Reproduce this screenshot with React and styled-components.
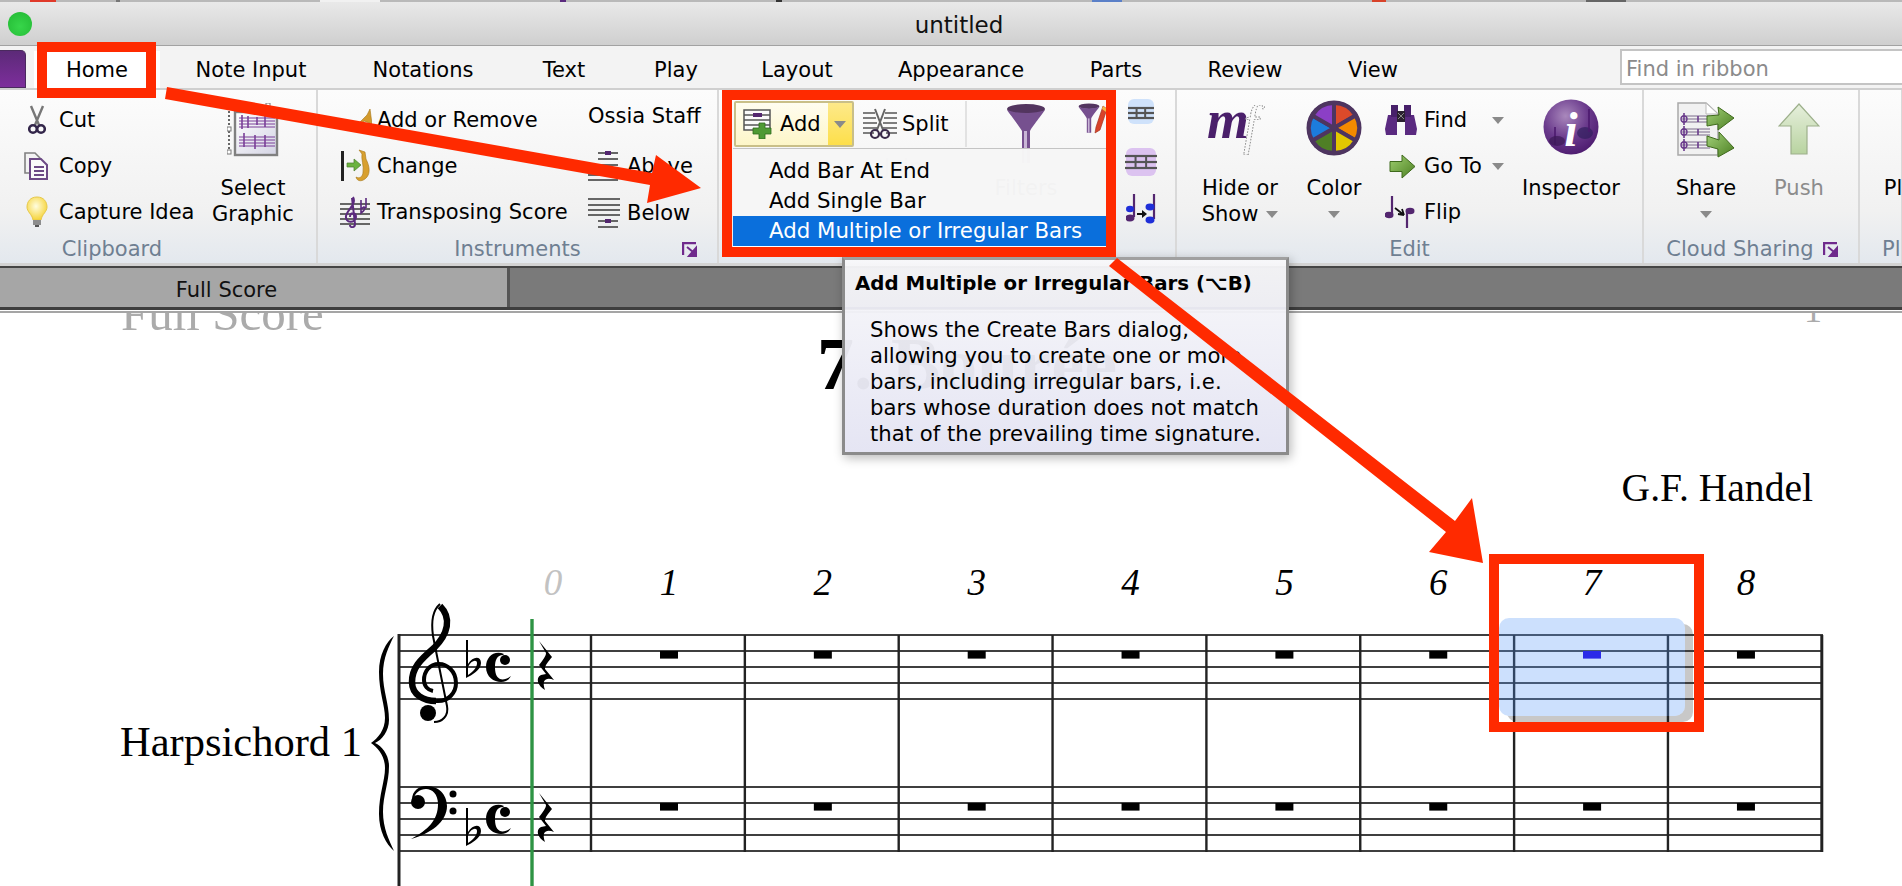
import React from "react";
import styled, { createGlobalStyle } from "styled-components";

const Global = createGlobalStyle`
  html, body { margin: 0; padding: 0; width: 1902px; height: 886px; overflow: hidden; background: #fff; }
  body { font-family: "DejaVu Sans", sans-serif; font-size: 21px; color: #000; }
  * { box-sizing: border-box; }
`;

const Window = styled.div`
  position: relative; width: 1902px; height: 886px; overflow: hidden;
  display: flex; flex-direction: column; background: #fff;
`;
const TopStrip = styled.div`
  height: 2px; display: flex; background: #b9b9b9;
`;
const StripBit = styled.span`
  width: ${p => p.$w}px; margin-left: ${p => p.$m}px; background: ${p => p.$c};
`;
const TitleBar = styled.div`
  height: 44px; display: flex; align-items: center; justify-content: center; position: relative;
  background: linear-gradient(#e9e9e9, #cfcfcf); border-bottom: 1px solid #a2a2a2;
  font-size: 23px; padding: 3px 0 0 16px; color: #111;
`;
const ZoomDot = styled.span`
  position: absolute; left: 8px; top: 10px; width: 24px; height: 24px; border-radius: 50%;
  background: radial-gradient(circle at 50% 60%, #37d64a, #22b833);
`;
const TabRow = styled.div`
  height: 44px; display: flex; align-items: center; padding: 5px 0 0 34px; position: relative;
  background: #f3f3f3; border-bottom: 2px solid #cfcfcf;
`;
const AppButton = styled.span`
  position: absolute; left: 0; top: 4px; width: 26px; height: 38px; border-radius: 0 5px 0 0;
  background: linear-gradient(#5c2a78, #7d2e9c); border: 1px solid #4a2a5e; border-left: none;
`;
const Tab = styled.div`
  width: ${p => p.$w}px; height: 37px; display: flex; align-items: center; justify-content: center;
  background: ${p => (p.$on ? "#fff" : "transparent")};
`;
const SearchBox = styled.div`
  position: absolute; left: 1620px; top: 3px; width: 290px; height: 36px;
  background: #fff; border: 2px solid #c4c4c4; color: #8b8b8b;
  display: flex; align-items: center; padding: 4px 0 0 4px;
`;
const Ribbon = styled.div`
  height: 173px; display: flex;
  background: linear-gradient(#fcfcfc 0%, #f1f1f1 70%, #e3e8ee 100%);
`;
const Group = styled.section`
  width: ${p => p.$w}px; flex: none; display: flex; flex-direction: column; position: relative;
  border-right: 2px solid #d9d9d9; overflow: ${p => (p.$clip ? "hidden" : "visible")};
`;
const GroupBody = styled.div`
  flex: 1; display: flex; padding: 7px 0 0 ${p => p.$pl}px; min-height: 0;
`;
const GroupLabel = styled.div`
  height: 28px; line-height: 28px; color: #6f7f92;
  padding-right: ${p => p.$pr || 0}px; padding-left: ${p => p.$pl || 0}px;
  text-align: ${p => (p.$left ? "left" : "center")};
`;
const Launcher = styled.svg`
  position: absolute; right: ${p => p.$r}px; bottom: 6px;
`;
const Stack = styled.div`
  display: flex; flex-direction: column; flex: none; width: ${p => (p.$w ? `${p.$w}px` : "auto")};
  margin-left: ${p => p.$ml || 0}px; row-gap: ${p => p.$gap || 0}px;
`;
const Row = styled.div`
  height: 46px; display: flex; align-items: center; white-space: nowrap;
`;
const IconCell = styled.span`
  width: ${p => p.$w}px; flex: none; display: flex; align-items: center;
  padding-left: ${p => p.$pl || 0}px;
`;
const Caret = styled.i`
  display: block; width: 0; height: 0; border: 6px solid transparent; border-bottom: none;
  border-top: 7px solid #8a8a8a;
  margin-left: ${p => p.$ml || "0"};
`;
const BigButton = styled.div`
  width: ${p => p.$w}px; flex: none; display: flex; flex-direction: column; align-items: center;
  margin-left: ${p => p.$ml || 0}px;
  color: ${p => (p.$dim ? "#8c8c8c" : "#000")};
`;
const BigIcon = styled.div`
  height: 78px; padding-top: ${p => p.$pt}px; display: flex; align-items: flex-start;
`;
const BigLine = styled.div`
  height: 26px; line-height: 26px; display: flex; align-items: center; column-gap: 8px; white-space: nowrap;
`;
const OssiaLabel = styled.div`
  height: 38px; line-height: 38px; margin-bottom: 6px; white-space: nowrap;
`;
const AddButton = styled.div`
  width: 120px; height: 46px; flex: none; margin-top: 4px; display: flex; align-items: center; padding-left: 7px;
  border: 2px solid #c9bf88; border-radius: 2px;
  background: linear-gradient(#fffdf0, #fdf6c8);
`;
const AddText = styled.span`
  margin-left: 7px;
`;
const AddDrop = styled.span`
  width: 24px; align-self: stretch; margin-left: auto; display: flex; align-items: center; justify-content: center;
  background: linear-gradient(#fde98a, #fddf4a);
`;
const SplitButton = styled.div`
  width: 113px; height: 46px; flex: none; margin-top: 4px; display: flex; align-items: center; padding-left: 9px;
  column-gap: 5px; border-right: 2px solid #e2e2e2;
`;
const TopRow = styled.div`
  display: flex;
`;
const GhostRow = styled.div`
  height: 40px; display: flex; align-items: center; padding-left: 150px; color: #888;
`;
const Menu = styled.ul`
  position: absolute; left: 14px; top: 58px; width: 374px; height: 99px; margin: 0; padding: 7px 0 0;
  list-style: none; background: rgba(246, 246, 246, 0.985); border-top: 1px solid #c4c4c4;
`;
const MenuItem = styled.li`
  height: 30px; line-height: 30px; padding-left: 36px; font-size: 21.3px;
  background: ${p => (p.$on ? "#0a6fdc" : "transparent")};
  color: ${p => (p.$on ? "#fff" : "#000")};
  box-shadow: ${p => (p.$on ? "0 1px 0 #fff" : "none")};
`;
const ColorIcons = styled.div`
  width: 66px; display: flex; flex-direction: column; align-items: center; padding-top: 2px;
`;
const SmallIcon = styled.div`
  height: ${p => p.$h}px; display: flex; align-items: flex-start;
`;
const TabStrip = styled.div`
  height: 44px; flex: none; display: flex; background: #7a7a7a; border-top: 2px solid #454545;
  border-bottom: 3px solid #3e3e3e; position: relative; margin-top: 3px;
  box-shadow: 0 -3px 0 #d3d3d3, 0 1px 0 #fff, 0 3px 0 #a5a5a5;
  z-index: 1;
`;
const ScoreTab = styled.div`
  width: 510px; background: #a6a6a6; border-right: 3px solid #555; display: flex; align-items: center;
  justify-content: center; padding: 4px 54px 0 0; color: #111;
`;
const Sheet = styled.div`
  flex: 1; display: flex; flex-direction: column; font-family: "Liberation Serif", serif; background: #fff; min-height: 0;
`;
const RunningHead = styled.div`
  display: flex; justify-content: space-between; padding: 0 80px 0 121px; margin-top: -21px;
  font-size: 49px; line-height: 49px; color: #ababab;
`;
const PageNumber = styled.span`
  font-size: 36px; margin-top: -3px;
`;
const Title = styled.div`
  font-size: 74px; line-height: 74px; font-weight: bold; padding-left: 817px; margin-top: -11px; white-space: nowrap;
`;
const Composer = styled.div`
  text-align: right; font-size: 39.6px; line-height: 40px; padding-right: 89px; margin-top: 67px;
`;
const Score = styled.svg`
  display: block; margin-top: 62px; flex: none;
`;
const Tooltip = styled.div`
  position: absolute; left: 842px; top: 257px; width: 447px; height: 198px; z-index: 5;
  border: 3px solid #8b8b8b; border-top-color: #a0a0a0;
  background: linear-gradient(rgba(248,248,250,0.95), rgba(228,228,243,0.97));
  box-shadow: 2px 3px 10px rgba(0,0,0,0.28);
  display: flex; flex-direction: column;
`;
const TipTitle = styled.div`
  height: 49px; display: flex; align-items: center; padding-left: 10px; font-weight: bold; font-size: 19.8px;
  border-bottom: 2px solid #e6e6ee; white-space: nowrap;
`;
const TipBody = styled.div`
  padding: 8px 0 0 25px; line-height: 26px; font-size: 21.2px; white-space: nowrap;
`;
const Overlay = styled.svg`
  position: absolute; left: 0; top: 0; z-index: 8; pointer-events: none;
`;
const RedBox = styled.div`
  position: absolute; z-index: 7; border: 10px solid #ff2a00;
  left: ${p => p.$x}px; top: ${p => p.$y}px; width: ${p => p.$w}px; height: ${p => p.$h}px;
`;

const I = ({ w, h, children, ...r }) => (
  <svg width={w} height={h} viewBox={`0 0 ${w} ${h}`} style={{ display: "block", flex: "none" }} {...r}>{children}</svg>
);

const Scissors = () => (
  <I w={18} h={30}>
    <path d="M3 1 L11 20 M15 1 L7 20" stroke="#777" strokeWidth="2.4" fill="none" />
    <circle cx="5" cy="24" r="3.8" fill="none" stroke="#33264a" strokeWidth="2.6" />
    <circle cx="13" cy="24" r="3.8" fill="none" stroke="#33264a" strokeWidth="2.6" />
  </I>
);
const Copy = () => (
  <I w={24} h={28}>
    <path d="M1 1 H11 L16 6 V21 H1 Z" fill="#f3f3f3" stroke="#808080" strokeWidth="1.6" />
    <path d="M6 7 H17 L23 13 V27 H6 Z" fill="#fafafa" stroke="#6d4a86" strokeWidth="2" />
    <path d="M10 15 H20 M10 19 H20 M10 23 H20" stroke="#6d4a86" strokeWidth="2" />
  </I>
);
const Bulb = () => (
  <I w={22} h={32}>
    <defs><radialGradient id="bulb" cx="45%" cy="40%" r="60%"><stop offset="0" stopColor="#fffde0" /><stop offset="1" stopColor="#f6d43a" /></radialGradient></defs>
    <path d="M11 1 C4 1 1 6 1 11 C1 16 6 18 7 24 H15 C16 18 21 16 21 11 C21 6 18 1 11 1 Z" fill="url(#bulb)" stroke="#e6c84a" />
    <rect x="7" y="24" width="8" height="5" fill="#8d8d8d" /><rect x="9" y="29" width="4" height="2" fill="#555" />
  </I>
);
const Staffs = ({ x, y, w, c = "#7a3f98" }) => (
  <g stroke={c} strokeWidth="1">
    {[0, 3, 6, 9].map(i => <path key={i} d={`M${x} ${y + i} H${x + w}`} />)}
  </g>
);
const SelectGraphic = () => (
  <I w={52} h={54}>
    <path d="M2 4 V49" stroke="#666" strokeWidth="2" strokeDasharray="2 2" fill="none" />
    <path d="M2 4 H40" stroke="#777" strokeWidth="1" strokeDasharray="2 2" />
    <rect x="39" y="0" width="4" height="4" fill="#fff" stroke="#777" />
    <rect x="0" y="24" width="4" height="4" fill="#fff" stroke="#777" />
    <rect x="0" y="47" width="4" height="4" fill="#fff" stroke="#777" />
    <rect x="8" y="9" width="42" height="43" fill="url(#sg)" stroke="#808080" strokeWidth="2.4" />
    <defs><linearGradient id="sg" x1="0" y1="0" x2="1" y2="1"><stop offset="0" stopColor="#fff" /><stop offset="1" stopColor="#d4d4e4" /></linearGradient></defs>
    <Staffs x={12} y={15} w={36} /><Staffs x={12} y={34} w={36} />
    <path d="M15 12 V26 M21 13 V25 M30 14 V22 M38 13 V24 M17 30 V44 M28 32 V46 M38 32 V44" stroke="#7a3f98" strokeWidth="1.6" />
  </I>
);
const Trumpet = () => (
  <I w={32} h={24}>
    <path d="M1 18 H16 L27 7 L30 1 L32 16 L24 13 L18 20 H4 Z" fill="#d39a2c" stroke="#a47618" strokeWidth=".6" />
    <rect x="6" y="19" width="10" height="4" fill="#c9c9c9" />
  </I>
);
const ChangeIc = () => (
  <I w={32} h={34}>
    <rect x="1" y="2" width="3" height="30" fill="#222" />
    <path d="M7 14 H14 V10 L21 16 L14 22 V18 H7 Z" fill="#6cb33f" stroke="#4a7d2b" strokeWidth=".7" />
    <path d="M19 1 L25 3 L26 10 C30 18 30 24 27 28 C23 33 17 33 16 28 C19 30 23 28 23 23 C24 17 21 10 22 5 Z" fill="#d8a02f" stroke="#a47618" strokeWidth=".6" />
  </I>
);
const Transpose = () => (
  <I w={30} h={32}>
    <g stroke="#666" strokeWidth="2">{[8, 13, 18, 23, 28].map(y => <path key={y} d={`M0 ${y} H30`} />)}</g>
    <path d="M13 1 C17 8 7 14 6 20 C5 27 15 28 16 21 C16 16 10 16 10 21 M12 2 L15 28 C15 32 10 32 10 29" stroke="#5b2a7e" strokeWidth="2" fill="none" />
    <path d="M21 4 V17 C24 15 26 12 24 11 L21 13 M26 2 V12" stroke="#5b2a7e" strokeWidth="1.6" fill="none" />
  </I>
);
const Above = () => (
  <I w={32} h={30}>
    <g stroke="#666" strokeWidth="2"><path d="M10 2 H30 M10 8 H30 M10 14 H30 M10 20 H30 M0 24 H30 M0 29 H30" /></g>
    <rect x="17" y="0" width="6" height="4" fill="#53266f" />
  </I>
);
const Below = () => (
  <I w={32} h={30}>
    <g stroke="#666" strokeWidth="2"><path d="M0 1 H32 M0 7 H32 M0 12 H32 M0 17 H32 M10 23 H30 M10 29 H30" /></g>
    <rect x="17" y="21" width="6" height="4" fill="#53266f" />
  </I>
);
const LaunchIc = (p) => (
  <Launcher width="16" height="15" viewBox="0 0 16 15" {...p}>
    <path d="M1 13 V1 H14" stroke="#6f2a8c" strokeWidth="2.4" fill="none" />
    <path d="M5 5 L11 10 M14 6 V14 H7 Z" stroke="#6f2a8c" strokeWidth="2" fill="#6f2a8c" />
  </Launcher>
);
const AddIc = () => (
  <I w={30} h={30}>
    <rect x="1" y="1" width="26" height="20" fill="#fafafa" stroke="#555" strokeWidth="1.5" />
    <g stroke="#555" strokeWidth="1.5"><path d="M1 6 H27 M1 11 H27 M1 16 H27" /></g>
    <rect x="10" y="4" width="9" height="4" fill="#53266f" />
    <path d="M16 14 H22 V19 H28 V25 H22 V30 H16 V25 H10 V19 H16 Z" fill="#4f9a34" stroke="#2f6a1c" strokeWidth=".8" />
  </I>
);
const SplitIc = () => (
  <I w={34} h={32}>
    <g stroke="#555" strokeWidth="1.6"><path d="M0 5 H12 M22 5 H34 M0 10 H13 M21 10 H34 M0 15 H14 M20 15 H34 M0 20 H14 M20 20 H34 M0 25 H11 M23 25 H34" /></g>
    <path d="M12 1 L20 22 M22 1 L14 22" stroke="#666" strokeWidth="2" />
    <circle cx="12" cy="26" r="4" fill="none" stroke="#3a2a4a" strokeWidth="2.2" /><circle cx="22" cy="26" r="4" fill="none" stroke="#3a2a4a" strokeWidth="2.2" />
  </I>
);
const Funnel = () => (
  <I w={40} h={60}>
    <ellipse cx="20" cy="6" rx="19" ry="5" fill="#53355f" />
    <path d="M1 7 C3 10 14 24 16 28 V60 H24 V28 C26 24 37 10 39 7 C30 11 10 11 1 7 Z" fill="#76508f" />
    <rect x="18" y="28" width="3" height="32" fill="#c9b6d6" />
  </I>
);
const Pencil = () => (
  <I w={31} h={31}>
    <g transform="scale(.55)"><ellipse cx="20" cy="6" rx="19" ry="5" fill="#53355f" /><path d="M1 7 C3 10 14 24 16 28 V54 H24 V28 C26 24 37 10 39 7 C30 11 10 11 1 7 Z" fill="#76508f" /><rect x="18" y="28" width="3" height="26" fill="#c9b6d6" /></g>
    <path d="M25 3 L29 6 L22 27 L17 30 L18 24 Z" fill="#d8432a" stroke="#9a2c18" strokeWidth=".6" />
    <path d="M25 3 L29 6 L28 9 L24 6 Z" fill="#f0b84a" />
  </I>
);
const Tile = ({ w, h, bg, lines }) => (
  <I w={w} h={h}>
    <rect x={w > 28 ? 1 : 0} y="0" width={w > 28 ? w - 2 : w} height={h} rx="6" fill={bg} />
    <g stroke="#555" strokeWidth="2.2">{lines.map(y => <path key={y} d={`M0 ${y} H${w}`} />)}</g>
    <path d={`M${w * 0.33} ${lines[0]} V${lines[lines.length - 1]} M${w * 0.66} ${lines[0]} V${lines[lines.length - 1]}`} stroke="#555" strokeWidth="2" />
  </I>
);
const SwapNotes = () => (
  <I w={30} h={32}>
    <path d="M8 1 V24" stroke="#53266f" strokeWidth="2.2" /><ellipse cx="4" cy="25" rx="4.5" ry="3.4" fill="#53266f" />
    <ellipse cx="4" cy="16" rx="4" ry="3.2" fill="#1f2fd8" />
    <path d="M28 1 V26" stroke="#53266f" strokeWidth="2.2" /><ellipse cx="24" cy="27" rx="4.5" ry="3.4" fill="#1f2fd8" /><ellipse cx="24" cy="14" rx="4.5" ry="3.4" fill="#1f2fd8" />
    <path d="M11 20 H16 V17 L21 21 L16 25 V22 H11 Z" fill="#111" />
  </I>
);
const MF = () => (
  <I w={66} h={50}>
    <text x="0" y="33" fontFamily="Liberation Serif, serif" fontStyle="italic" fontWeight="bold" fontSize="54" fill="#4a1f6a">m</text>
    <text x="36" y="38" fontFamily="Liberation Serif, serif" fontStyle="italic" fontSize="56" fill="none" stroke="#888" strokeWidth=".9" strokeDasharray="1.6 1.4">f</text>
  </I>
);
const wedge = (a0, a1, r = 25, c = 28) => {
  const p = a => [c + r * Math.cos((a * Math.PI) / 180), c - r * Math.sin((a * Math.PI) / 180)];
  const [x0, y0] = p(a0), [x1, y1] = p(a1);
  return `M${c} ${c} L${x0} ${y0} A${r} ${r} 0 0 0 ${x1} ${y1} Z`;
};
const Wheel = () => (
  <I w={56} h={56}>
    <circle cx="28" cy="28" r="27.5" fill="#4e3560" />
    {[[30, 90, "#dc4a2a"], [-30, 30, "#f48a00"], [-90, -30, "#e3c800"], [-150, -90, "#4f7f25"], [150, 210, "#1c7cdc"], [90, 150, "#8b3fc6"]].map(([a, b, c]) => (
      <path key={a} d={wedge(a, b)} fill={c} stroke="#4e3560" strokeWidth="4" />
    ))}
  </I>
);
const Binoculars = () => (
  <I w={32} h={30}>
    <path d="M0 24 L3 10 H12 V30 H1 Z M20 10 H29 L32 24 L31 30 H20 Z" fill="#5a2a80" />
    <rect x="6" y="0" width="7" height="12" fill="#47206a" /><rect x="19" y="0" width="7" height="12" fill="#47206a" />
    <rect x="12" y="6" width="8" height="11" fill="#2a2030" />
    <path d="M13 8 L19 14 M19 8 L13 14" stroke="#888" />
  </I>
);
const GreenArrow = () => (
  <I w={27} h={25}>
    <defs><linearGradient id="ga" x1="0" y1="0" x2="1" y2="1"><stop offset="0" stopColor="#9fd070" /><stop offset="1" stopColor="#4c7f22" /></linearGradient></defs>
    <path d="M1 7.5 H13 V1 L26 12.5 L13 24 V17.5 H1 Z" fill="url(#ga)" stroke="#3f6a1c" />
  </I>
);
const FlipIc = () => (
  <I w={31} h={33}>
    <path d="M7 0 V19" stroke="#53266f" strokeWidth="2.2" /><ellipse cx="4" cy="19" rx="4.5" ry="3.2" fill="#53266f" />
    <path d="M22 32 V15" stroke="#53266f" strokeWidth="2.2" /><ellipse cx="25" cy="15" rx="4.5" ry="3.2" fill="#53266f" />
    <path d="M10 12 L19 19 M19 19 L13 18 M19 19 L17 13" stroke="#111" strokeWidth="1.8" fill="none" />
  </I>
);
const Inspector = () => (
  <I w={56} h={56}>
    <defs>
      <radialGradient id="insp" cx="40%" cy="30%" r="75%"><stop offset="0" stopColor="#a988bc" /><stop offset=".55" stopColor="#6a3a8c" /><stop offset="1" stopColor="#4c1a6e" /></radialGradient>
    </defs>
    <circle cx="28" cy="28" r="27.5" fill="url(#insp)" />
    <ellipse cx="42" cy="34" rx="8" ry="6" fill="#32205e" opacity=".7" />
    <path d="M46 33 V10 M12 46 V28" stroke="#4c1a6e" strokeWidth="1.6" />
    <ellipse cx="14" cy="42" rx="8" ry="5" fill="#3a1a56" opacity=".7" />
    <text x="28" y="47" textAnchor="middle" fontFamily="Liberation Serif, serif" fontStyle="italic" fontWeight="bold" fontSize="48" fill="#fff">i</text>
  </I>
);
const Share = () => (
  <I w={58} h={56}>
    <path d="M1 1 H29 L41 12 V53 H1 Z" fill="#f1f1f1" stroke="#a9a9a9" strokeWidth="1.5" />
    <path d="M29 1 V12 H41 Z" fill="#fff" stroke="#bbb" />
    {[17, 30, 43].map(y => (
      <g key={y}><g stroke="#7a6a8a" strokeWidth="1"><path d={`M5 ${y - 3} H33 M5 ${y} H33 M5 ${y + 3} H33`} /></g>
        <path d={`M7 ${y - 6} V${y + 6} M21 ${y - 3} V${y + 3}`} stroke="#6a3a8c" strokeWidth="1.6" /><circle cx="7" cy={y} r="3" fill="none" stroke="#6a3a8c" strokeWidth="1.4" /></g>
    ))}
    <path d="M30 14 L42 13 L41 5 L57 16 L41 28 L41 22 L30 24 Z" fill="url(#sa)" stroke="#3f6a1c" />
    <path d="M30 34 L42 38 L42 30 L57 46 L41 55 L41 47 L30 44 Z" fill="url(#sa)" stroke="#3f6a1c" />
    <defs><linearGradient id="sa" x1="0" y1="0" x2="1" y2="1"><stop offset="0" stopColor="#a4d27a" /><stop offset="1" stopColor="#4b7f22" /></linearGradient></defs>
  </I>
);
const Push = () => (
  <I w={42} h={52}>
    <defs><linearGradient id="pu" x1="0" y1="0" x2="0" y2="1"><stop offset="0" stopColor="#e6efdc" /><stop offset="1" stopColor="#b8d3a0" /></linearGradient></defs>
    <path d="M21 1 L41 23 H29 V51 H13 V23 H1 Z" fill="url(#pu)" stroke="#9db08c" strokeWidth="1.2" />
  </I>
);

const Treble = () => (
  <g fill="none" stroke="#000">
    <path d="M440 606 C452 618 448 634 434 648 C420 660 412 668 412 682 C412 695 424 701 436 701" strokeWidth="6.5" />
    <path d="M436 701 C449 702 456 692 456 683 C456 671 447 664 439 664 C429 664 424 672 424 680 C424 686 428 690 433 691" strokeWidth="4" />
    <path d="M440 604 C433 610 431 622 433 636 L447 706 C449 716 442 722 434 722" strokeWidth="2" />
    <circle cx="428" cy="713" r="8" fill="#000" stroke="none" />
  </g>
);
const BassClef = () => (
  <g>
    <path d="M412 800 C412 790 420 786 426 786 C442 786 447 798 447 806 C447 822 430 834 411 839 C428 830 438 820 438 804 C438 794 432 789 426 789 C420 789 415 793 414 798 Z" fill="#000" />
    <circle cx="418" cy="802" r="7" fill="#000" /><circle cx="453" cy="794" r="3.5" fill="#000" /><circle cx="453" cy="811" r="3.5" fill="#000" />
  </g>
);
const FlatSign = ({ y }) => (
  <path transform={`translate(0 ${y})`} d="M466 640 H468 V664 C473 656 481 656 481 663 C481 670 472 675 466 678 Z M468 667 V675 C474 671 477 667 477 663 C477 659 471 660 468 667 Z" fill="#000" fillRule="evenodd" />
);
const Common = ({ y }) => (
  <g transform={`translate(0 ${y})`}>
    <path d="M504 654 C494 650 486 657 486 667 C486 677 494 682 501 682 C505 682 509 680 511 676 C507 679 503 680 500 679 C496 677 495 672 495 667 C495 660 497 655 503 655 Z" fill="#000" />
    <circle cx="505" cy="660" r="5" fill="#000" />
  </g>
);
const QuarterRest = ({ y }) => (
  <path transform={`translate(0 ${y})`} d="M539 641 L552 657 C548 662 545 665 545 669 L554 680 C547 677 541 679 545 690 C538 686 535 678 541 675 L546 674 L539 665 C543 660 546 656 546 653 Z" fill="#000" />
);
const bars = Array.from({ length: 9 }, (_, i) => 591 + i * 153.85);
const staffY = [635, 651, 667, 683, 699, 787, 803, 819, 835, 851];
const tabs = [["Home", 126], ["Note Input", 182], ["Notations", 162], ["Text", 120], ["Play", 104], ["Layout", 138], ["Appearance", 190], ["Parts", 120], ["Review", 138], ["View", 118]];

const numStyle = { fontFamily: "Liberation Serif, serif", fontStyle: "italic", fontSize: 37 };

export default function App() {
  return (
    <Window>
      <Global />
      <TopStrip>
        <StripBit $m={30} $w={26} $c="#e03a2a" /><StripBit $m={60} $w={4} $c="#777" /><StripBit $m={200} $w={60} $c="#f1f1f1" />
        <StripBit $m={180} $w={6} $c="#5b2a7e" /><StripBit $m={210} $w={6} $c="#333" /><StripBit $m={310} $w={30} $c="#5b80c8" />
        <StripBit $m={250} $w={14} $c="#d8432a" /><StripBit $m={200} $w={40} $c="#666" />
      </TopStrip>
      <TitleBar><ZoomDot />untitled</TitleBar>
      <TabRow>
        <AppButton />
        {tabs.map(([t, w], i) => <Tab key={t} $w={w} $on={i === 0}>{t}</Tab>)}
        <SearchBox>Find in ribbon</SearchBox>
      </TabRow>
      <Ribbon>
        <Group $w={318}>
          <GroupBody $pl={24}>
            <Stack $w={179}>
              <Row><IconCell $w={35} $pl={4}><Scissors /></IconCell>Cut</Row>
              <Row><IconCell $w={35}><Copy /></IconCell>Copy</Row>
              <Row><IconCell $w={35} $pl={2}><Bulb /></IconCell>Capture Idea</Row>
            </Stack>
            <BigButton $w={100}>
              <BigIcon $pt={6}><SelectGraphic /></BigIcon>
              <BigLine>Select</BigLine><BigLine>Graphic</BigLine>
            </BigButton>
          </GroupBody>
          <GroupLabel $pr={92}>Clipboard</GroupLabel>
        </Group>
        <Group $w={401}>
          <GroupBody $pl={22}>
            <Stack $w={248}>
              <Row><IconCell $w={37}><Trumpet /></IconCell>Add or Remove</Row>
              <Row><IconCell $w={37}><ChangeIc /></IconCell>Change</Row>
              <Row><IconCell $w={37}><Transpose /></IconCell>Transposing Score</Row>
            </Stack>
            <Stack $gap={2}>
              <OssiaLabel>Ossia Staff</OssiaLabel>
              <Row><IconCell $w={39}><Above /></IconCell>Above</Row>
              <Row><IconCell $w={39}><Below /></IconCell>Below</Row>
            </Stack>
          </GroupBody>
          <GroupLabel>Instruments</GroupLabel>
          <LaunchIc $r={19} />
        </Group>
        <Group $w={458}>
          <GroupBody $pl={15}>
            <Stack>
              <TopRow>
                <AddButton><AddIc /><AddText>Add</AddText><AddDrop><Caret /></AddDrop></AddButton>
                <SplitButton><SplitIc />Split</SplitButton>
              </TopRow>
              <GhostRow>Join</GhostRow>
            </Stack>
            <BigButton $w={118}>
              <BigIcon $pt={6}><Funnel /></BigIcon>
              <BigLine>Filters</BigLine>
            </BigButton>
            <Stack $ml={-7} $w={30}><BigIcon $pt={6}><Pencil /></BigIcon></Stack>
            <ColorIcons>
              <SmallIcon $h={49}><Tile w={26} h={25} bg="#cfe2fb" lines={[9, 14, 19]} /></SmallIcon>
              <SmallIcon $h={45}><Tile w={32} h={28} bg="#dcc3f0" lines={[8, 14, 20]} /></SmallIcon>
              <SmallIcon $h={32}><SwapNotes /></SmallIcon>
            </ColorIcons>
          </GroupBody>
          <GroupLabel>Bars</GroupLabel>
          <Menu>
            <MenuItem>Add Bar At End</MenuItem>
            <MenuItem>Add Single Bar</MenuItem>
            <MenuItem $on>Add Multiple or Irregular Bars</MenuItem>
          </Menu>
        </Group>
        <Group $w={467}>
          <GroupBody $pl={13}>
            <BigButton $w={100}>
              <BigIcon $pt={8}><MF /></BigIcon>
              <BigLine>Hide or</BigLine><BigLine>Show<Caret /></BigLine>
            </BigButton>
            <BigButton $w={88}>
              <BigIcon $pt={3}><Wheel /></BigIcon>
              <BigLine>Color</BigLine><BigLine><Caret /></BigLine>
            </BigButton>
            <Stack $w={119} $ml={7}>
              <Row><IconCell $w={39}><Binoculars /></IconCell>Find<Caret $ml="auto" /></Row>
              <Row><IconCell $w={39} $pl={4}><GreenArrow /></IconCell>Go To<Caret $ml="auto" /></Row>
              <Row><IconCell $w={39}><FlipIc /></IconCell>Flip</Row>
            </Stack>
            <BigButton $w={122} $ml={6}>
              <BigIcon $pt={2}><Inspector /></BigIcon>
              <BigLine>Inspector</BigLine>
            </BigButton>
          </GroupBody>
          <GroupLabel>Edit</GroupLabel>
        </Group>
        <Group $w={216}>
          <GroupBody $pl={12}>
            <BigButton $w={100}>
              <BigIcon $pt={5}><Share /></BigIcon>
              <BigLine>Share</BigLine><BigLine><Caret /></BigLine>
            </BigButton>
            <BigButton $w={86} $dim>
              <BigIcon $pt={6}><Push /></BigIcon>
              <BigLine>Push</BigLine>
            </BigButton>
          </GroupBody>
          <GroupLabel $pr={22}>Cloud Sharing</GroupLabel>
          <LaunchIc $r={19} />
        </Group>
        <Group $w={43} $clip>
          <GroupBody $pl={23}>
            <BigButton $w={20}>
              <BigIcon $pt={5} />
              <BigLine>Pl</BigLine>
            </BigButton>
          </GroupBody>
          <GroupLabel $left $pl={22}>Pl</GroupLabel>
        </Group>
      </Ribbon>
      <TabStrip><ScoreTab>Full Score</ScoreTab></TabStrip>
      <Sheet>
        <RunningHead><span>Full Score</span><PageNumber>1</PageNumber></RunningHead>
        <Title>7. Bourée</Title>
        <Composer>G.F. Handel</Composer>
        <Score width="1902" height="316" viewBox="0 570 1902 316">
          <rect x="1507" y="624" width="186" height="98" rx="10" fill="#c8c8c8" />
          <rect x="1499" y="618" width="186" height="98" rx="10" fill="#fff" />
          <g stroke="#3f3f3f" strokeWidth="2">{staffY.map(y => <path key={y} d={`M398 ${y} H1823`} />)}</g>
          <g stroke="#222" strokeWidth="2.4">{bars.map((x, i) => <path key={i} d={`M${x} 635 V852`} strokeWidth={i === 8 ? 3 : 2.4} />)}</g>
          <path d="M399 634 V886" stroke="#222" strokeWidth="3" />
          <path d="M532 619 V886" stroke="#2e9444" strokeWidth="3.4" />
          <Treble /><BassClef />
          <FlatSign y={0} /><FlatSign y={168} /><Common y={0} /><Common y={152} />
          <QuarterRest y={0} /><QuarterRest y={152} />
          <path d="M394 636 C386 642 379 655 379 672 C379 692 385 705 385 718 C385 730 378 738 371 743 C378 748 385 756 385 768 C385 781 379 794 379 814 C379 831 386 844 394 851 C389 840 383 828 383 812 C383 795 389 783 389 766 C389 755 382 746 375 743 C382 740 389 731 389 720 C389 703 383 691 383 674 C383 658 389 646 394 636 Z" fill="#000" />
          <text x="120" y="756" fontFamily="Liberation Serif, serif" fontSize="42.5">Harpsichord 1</text>
          <text x="553" y="595" textAnchor="middle" fill="#c2c2c2" style={numStyle}>0</text>
          {bars.slice(0, 8).map((_, i) => (
            <g key={i}>
              <text x={669 + i * 153.85} y="595" textAnchor="middle" style={numStyle}>{i + 1}</text>
              {i !== 6 && <rect x={660 + i * 153.85} y="651" width="18" height="7.6" fill="#000" />}
              <rect x={660 + i * 153.85} y="803" width="18" height="7.6" fill="#000" />
            </g>
          ))}
          <rect x="1499" y="618" width="186" height="98" rx="10" fill="rgb(85,152,248)" fillOpacity=".3" />
          <rect x="1583" y="651" width="18" height="7.6" fill="#2a2ae8" />
        </Score>
      </Sheet>
      <Tooltip>
        <TipTitle>Add Multiple or Irregular Bars (⌥B)</TipTitle>
        <TipBody>
          Shows the Create Bars dialog,<br />
          allowing you to create one or more<br />
          bars, including irregular bars, i.e.<br />
          bars whose duration does not match<br />
          that of the prevailing time signature.
        </TipBody>
      </Tooltip>
      <RedBox $x={37} $y={42} $w={119} $h={56} />
      <RedBox $x={722} $y={90} $w={394} $h={167} />
      <RedBox $x={1489} $y={554} $w={215} $h={178} />
      <Overlay width="1902" height="886" viewBox="0 0 1902 886">
        <polygon fill="#ff2a00" points="167,87 652,173 656,155 701,188 647,203 650,185 165,99" />
        <polygon fill="#ff2a00" points="1117,258 1455,521 1472,498 1483,563 1429,552 1446,532 1109,266" />
      </Overlay>
    </Window>
  );
}
